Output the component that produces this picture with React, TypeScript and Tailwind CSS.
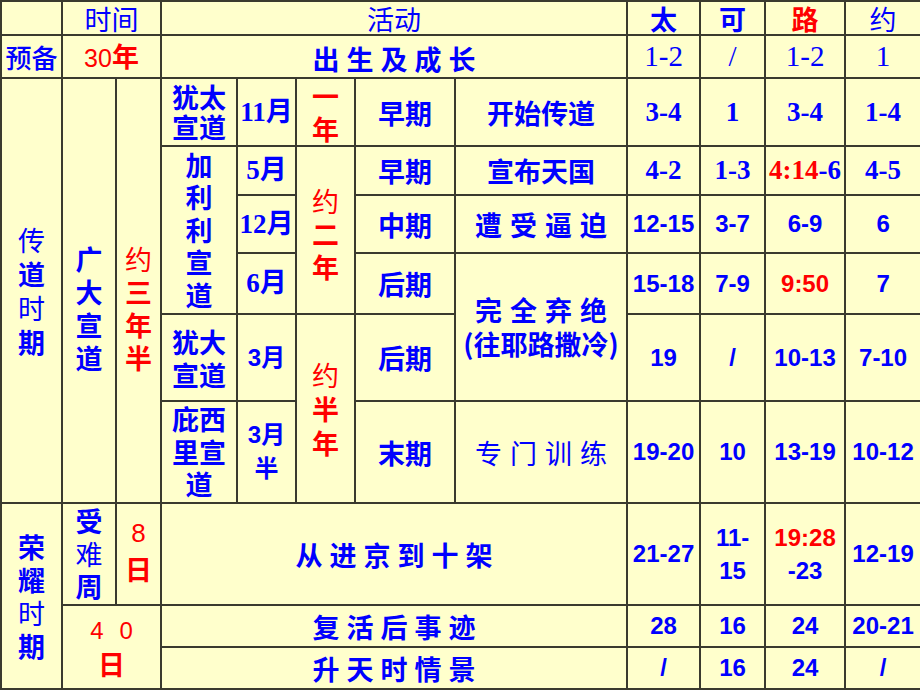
import type { ReactNode } from 'react'

const cjk = "font-['Noto_Sans_CJK_SC',sans-serif]"
const serifNum = "font-['Liberation_Serif','Noto_Sans_CJK_SC',serif]"
const sansNum = "font-['Liberation_Sans','Noto_Sans_CJK_SC',sans-serif]"
const blue = 'text-[#0000ff]'
const red = 'text-[#ff0000]'

function Td({
  children,
  className = '',
  colSpan,
  rowSpan,
}: {
  children?: ReactNode
  className?: string
  colSpan?: number
  rowSpan?: number
}) {
  return (
    <td
      colSpan={colSpan}
      rowSpan={rowSpan}
      className={`border-2 border-[#3a3a2e] p-0 text-center align-middle ${className}`}
    >
      {children}
    </td>
  )
}

// characters laid out with even gaps, like the spaced headings on the slide
function Spaced({ text, gap = 'gap-[7px]' }: { text: string; gap?: string }) {
  return (
    <span className={`inline-flex ${gap}`}>
      {[...text].map((c, i) => (
        <span key={i}>{c}</span>
      ))}
    </span>
  )
}

// one character per line
function Stack({ children, className = '' }: { children: ReactNode; className?: string }) {
  return <div className={`flex flex-col items-center ${className}`}>{children}</div>
}

const S = `${serifNum} font-bold text-[27px] ${blue}`
const N = `${sansNum} font-bold text-[24px] ${blue}`
const C = `${cjk} font-bold text-[27px] ${blue}`

export default function App() {
  return (
    <div className="w-[920px] h-[690px] bg-[#ffffcc] overflow-hidden">
      <table className="w-[920px] table-fixed border-collapse bg-[#ffffcc] leading-none">
        <colgroup>
          <col className="w-[61px]" />
          <col className="w-[54px]" />
          <col className="w-[45px]" />
          <col className="w-[76px]" />
          <col className="w-[59px]" />
          <col className="w-[59px]" />
          <col className="w-[100px]" />
          <col className="w-[172px]" />
          <col className="w-[73px]" />
          <col className="w-[65px]" />
          <col className="w-[80px]" />
          <col className="w-[76px]" />
        </colgroup>
        <tbody>
          <tr className="h-[34px]">
            <Td />
            <Td colSpan={2} className={`${cjk} text-[27px] ${blue}`}>时间</Td>
            <Td colSpan={5} className={`${cjk} text-[27px] ${blue}`}>活动</Td>
            <Td className={C}>太</Td>
            <Td className={C}>可</Td>
            <Td className={`${cjk} font-bold text-[27px] ${red}`}>路</Td>
            <Td className={`${cjk} text-[27px] ${blue}`}>约</Td>
          </tr>

          <tr className="h-[43px]">
            <Td className={`${cjk} font-medium text-[26px] ${blue}`}>预备</Td>
            <Td colSpan={2} className={`${sansNum} text-[25px] ${red}`}>
              30<span className={`${cjk} font-bold text-[27px]`}>年</span>
            </Td>
            <Td colSpan={5} className={`${C} pt-[4px]`}>
              <Spaced text="出生及成长" />
            </Td>
            <Td className={`${serifNum} text-[29px] ${blue}`}>1-2</Td>
            <Td className={`${serifNum} text-[29px] ${blue}`}>/</Td>
            <Td className={`${serifNum} text-[29px] ${blue}`}>1-2</Td>
            <Td className={`${serifNum} text-[29px] ${blue}`}>1</Td>
          </tr>

          <tr className="h-[68px]">
            <Td rowSpan={6} className={`${cjk} text-[27px] ${blue}`}>
              <Stack className="leading-[34px]">
                <span>传</span>
                <span className="font-bold">道</span>
                <span>时</span>
                <span className="font-bold">期</span>
              </Stack>
            </Td>
            <Td rowSpan={6} className={C}>
              <Stack className="leading-[33px] pt-[34px]">
                <span>广</span>
                <span>大</span>
                <span>宣</span>
                <span>道</span>
              </Stack>
            </Td>
            <Td rowSpan={6} className={`${cjk} text-[27px] ${red}`}>
              <Stack className="leading-[33px] pt-[34px]">
                <span>约</span>
                <span className="font-bold">三</span>
                <span className="font-bold">年</span>
                <span className="font-bold">半</span>
              </Stack>
            </Td>
            <Td className={`${C} leading-[30px]`}>
              犹太
              <br />
              宣道
            </Td>
            <Td className={S}>11月</Td>
            <Td className={`${cjk} font-bold text-[27px] ${red}`}>
              <Stack className="leading-[33px]">
                <span>一</span>
                <span>年</span>
              </Stack>
            </Td>
            <Td className={C}>早期</Td>
            <Td className={C}>开始传道</Td>
            <Td className={S}>3-4</Td>
            <Td className={S}>1</Td>
            <Td className={S}>3-4</Td>
            <Td className={S}>1-4</Td>
          </tr>

          <tr className="h-[49px]">
            <Td rowSpan={3} className={C}>
              <Stack className="leading-[32.5px]">
                <span>加</span>
                <span>利</span>
                <span>利</span>
                <span>宣</span>
                <span>道</span>
              </Stack>
            </Td>
            <Td className={S}>5月</Td>
            <Td rowSpan={3} className={`${cjk} text-[27px] ${red}`}>
              <Stack className="leading-[33px] pt-[6px]">
                <span>约</span>
                <span className="font-bold">二</span>
                <span className="font-bold">年</span>
              </Stack>
            </Td>
            <Td className={C}>早期</Td>
            <Td className={C}>宣布天国</Td>
            <Td className={S}>4-2</Td>
            <Td className={S}>1-3</Td>
            <Td className={`${S} whitespace-nowrap`}>
              <span className={red}>4:14</span>-6
            </Td>
            <Td className={S}>4-5</Td>
          </tr>

          <tr className="h-[58px]">
            <Td className={S}>12月</Td>
            <Td className={C}>中期</Td>
            <Td className={C}>
              <Spaced text="遭受逼迫" gap="gap-[8px]" />
            </Td>
            <Td className={N}>12-15</Td>
            <Td className={N}>3-7</Td>
            <Td className={N}>6-9</Td>
            <Td className={N}>6</Td>
          </tr>

          <tr className="h-[61px]">
            <Td className={S}>6月</Td>
            <Td className={C}>后期</Td>
            <Td rowSpan={2} className={`${C} leading-[34px]`}>
              <Spaced text="完全弃绝" gap="gap-[8px]" />
              <br />
              <span className="whitespace-nowrap">(往耶路撒冷)</span>
            </Td>
            <Td className={N}>15-18</Td>
            <Td className={N}>7-9</Td>
            <Td className={`${sansNum} font-bold text-[24px] ${red}`}>9:50</Td>
            <Td className={N}>7</Td>
          </tr>

          <tr className="h-[87px]">
            <Td className={`${C} leading-[33px]`}>
              犹大
              <br />
              宣道
            </Td>
            <Td className={N}>3月</Td>
            <Td rowSpan={2} className={`${cjk} text-[27px] ${red}`}>
              <Stack className="leading-[34px]">
                <span>约</span>
                <span className="font-bold">半</span>
                <span className="font-bold">年</span>
              </Stack>
            </Td>
            <Td className={C}>后期</Td>
            <Td className={N}>19</Td>
            <Td className={N}>/</Td>
            <Td className={N}>10-13</Td>
            <Td className={N}>7-10</Td>
          </tr>

          <tr className="h-[102px]">
            <Td className={`${C} leading-[32.5px]`}>
              庇西
              <br />
              里宣
              <br />
              道
            </Td>
            <Td className={`${N} leading-[34px]`}>
              3月
              <br />
              半
            </Td>
            <Td className={C}>末期</Td>
            <Td className={`${cjk} text-[27px] ${blue}`}>
              <Spaced text="专门训练" gap="gap-[8px]" />
            </Td>
            <Td className={N}>19-20</Td>
            <Td className={N}>10</Td>
            <Td className={N}>13-19</Td>
            <Td className={N}>10-12</Td>
          </tr>

          <tr className="h-[102px]">
            <Td rowSpan={3} className={`${cjk} text-[27px] ${blue}`}>
              <Stack className="leading-[33px]">
                <span className="font-bold">荣</span>
                <span className="font-bold">耀</span>
                <span>时</span>
                <span className="font-bold">期</span>
              </Stack>
            </Td>
            <Td className={`${cjk} text-[27px] ${blue}`}>
              <Stack className="leading-[32.5px]">
                <span className="font-bold">受</span>
                <span>难</span>
                <span className="font-bold">周</span>
              </Stack>
            </Td>
            <Td className={`${red}`}>
              <Stack className="leading-[35px] pb-[6px]">
                <span className={`${sansNum} text-[26px]`}>8</span>
                <span className={`${cjk} font-bold text-[27px]`}>日</span>
              </Stack>
            </Td>
            <Td colSpan={5} className={C}>
              <Spaced text="从进京到十架" />
            </Td>
            <Td className={N}>21-27</Td>
            <Td className={`${N} leading-[33px]`}>
              11-
              <br />
              15
            </Td>
            <Td className={`${N} leading-[33px]`}>
              <span className={red}>19:28</span>
              <br />
              -23
            </Td>
            <Td className={N}>12-19</Td>
          </tr>

          <tr className="h-[42px]">
            <Td colSpan={2} rowSpan={2} className={red}>
              <Stack className="leading-[33px]">
                <span className={`${sansNum} text-[24px] flex gap-[16px]`}>
                  <span>4</span>
                  <span>0</span>
                </span>
                <span className={`${cjk} font-bold text-[27px]`}>日</span>
              </Stack>
            </Td>
            <Td colSpan={5} className={C}>
              <Spaced text="复活后事迹" />
            </Td>
            <Td className={N}>28</Td>
            <Td className={N}>16</Td>
            <Td className={N}>24</Td>
            <Td className={N}>20-21</Td>
          </tr>

          <tr className="h-[42px]">
            <Td colSpan={5} className={C}>
              <Spaced text="升天时情景" />
            </Td>
            <Td className={N}>/</Td>
            <Td className={N}>16</Td>
            <Td className={N}>24</Td>
            <Td className={N}>/</Td>
          </tr>
        </tbody>
      </table>
    </div>
  )
}
